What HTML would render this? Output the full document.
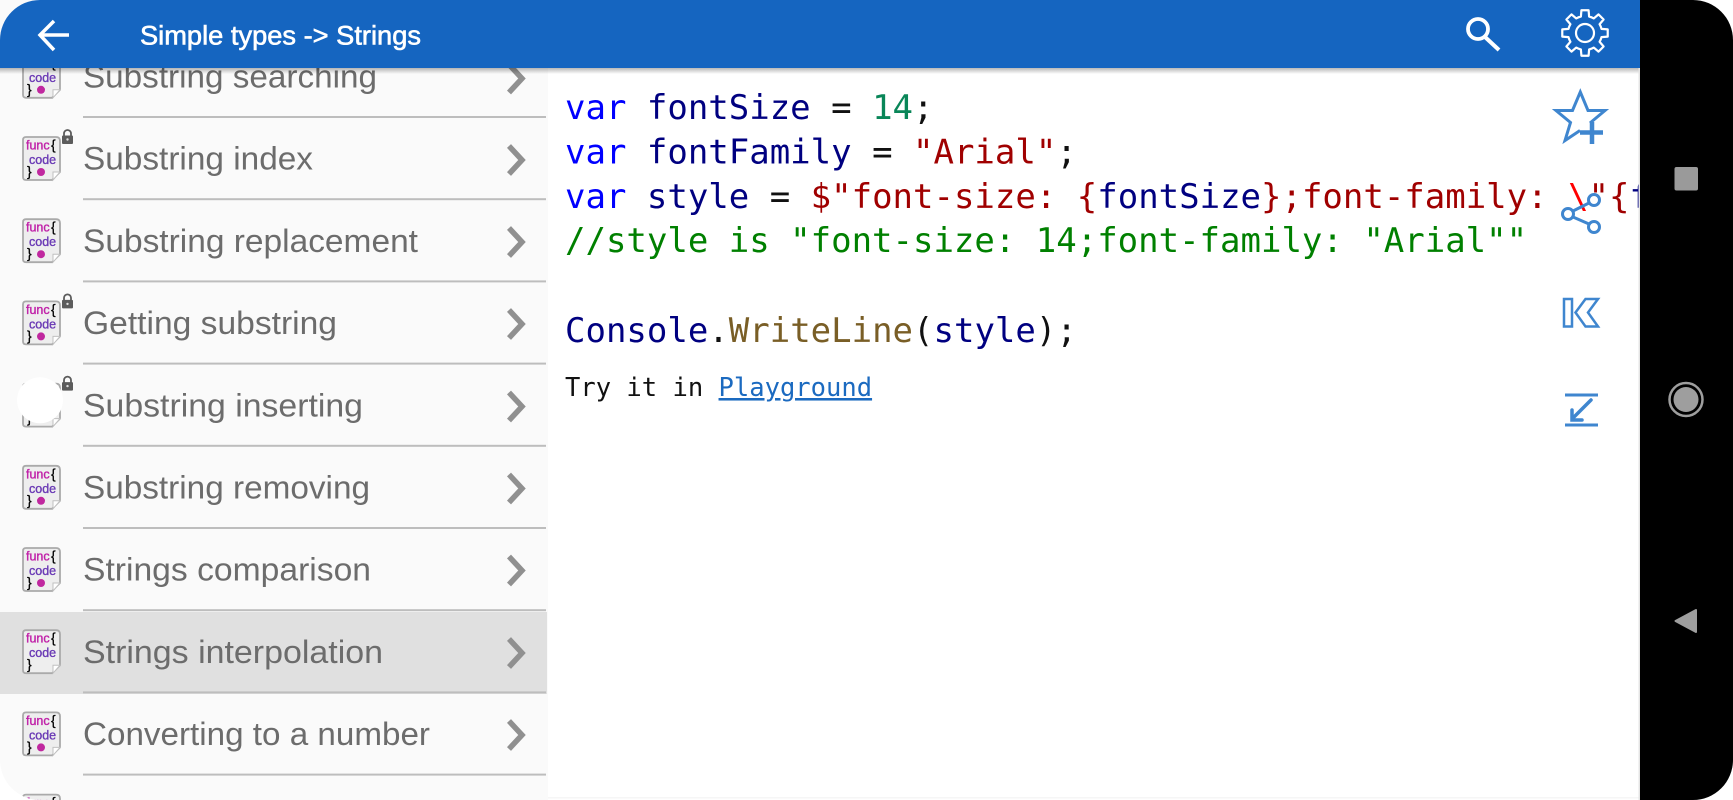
<!DOCTYPE html>
<html><head><meta charset="utf-8">
<style>
html,body{margin:0;padding:0;background:#fff;width:1733px;height:800px;overflow:hidden}
svg{display:block}
.r{font-family:"Liberation Sans",sans-serif;font-size:32.500px;fill:#6c6c6c}
.m{font-family:"DejaVu Sans Mono","Liberation Mono",monospace;font-size:34px;white-space:pre}
.k{fill:#0000ff}.n{fill:#000080}.s{fill:#a00000}.c{fill:#008000}.f{fill:#795e26}.d{fill:#098658}.b{fill:#111}
.fn{font-family:"Liberation Sans",sans-serif;font-size:12.500px;fill:#c020a8;stroke:#c020a8;stroke-width:.35px}
.co{font-family:"Liberation Sans",sans-serif;font-size:12.500px;fill:#6a3ab5;stroke:#6a3ab5;stroke-width:.35px}
.br{font-family:"Liberation Sans",sans-serif;font-size:14px;fill:#000;stroke:#000;stroke-width:.3px}
</style></head>
<body>
<svg width="1733" height="800" viewBox="0 0 1733 800" xmlns="http://www.w3.org/2000/svg">
<defs>
<linearGradient id="sh" x1="0" y1="0" x2="0" y2="1"><stop offset="0" stop-color="#000" stop-opacity=".28"/><stop offset="1" stop-color="#000" stop-opacity="0"/></linearGradient>
<g id="doc">
<path d="M26 137H56Q60 137 60 141V172L52 180H26Q23 180 23 177V140Q23 137 26 137Z" fill="#eeeeee" stroke="#aaaaaa" stroke-width="1.800"/>
<path d="M60 172H53V180Z" fill="#fff" stroke="#c0c0c0" stroke-width="1"/>
</g>
<g id="lock">
<path d="M64 136V133.500A3.500 3.500 0 0 1 71 133.500V136" fill="none" stroke="#5c5c5c" stroke-width="1.800"/>
<rect x="62" y="135.500" width="11" height="8.500" rx="1" fill="#5c5c5c"/>
<circle cx="67.500" cy="139.500" r="1.200" fill="#ddd"/>
</g>
</defs>

<!-- list -->
<path d="M0 0H548V800H40A40 40 0 0 1 0 760Z" fill="#fafafa"/>
<rect x="548" y="797" width="1092" height="1.500" fill="#f6f6f6"/>
<rect x="0" y="612" width="547" height="82" fill="#e0e0e0"/>

<g fill="#bdbdbd">
<rect x="83" y="116" width="463" height="2"/>
<rect x="83" y="198.200" width="463" height="2"/>
<rect x="83" y="280.400" width="463" height="2"/>
<rect x="83" y="362.600" width="463" height="2"/>
<rect x="83" y="444.800" width="463" height="2"/>
<rect x="83" y="527" width="463" height="2"/>
<rect x="83" y="609.200" width="463" height="2"/>
<rect x="83" y="691.400" width="463" height="2"/>
<rect x="83" y="773.600" width="463" height="2"/>
</g>

<!-- row text -->
<text class="r" x="83" y="87.500" textLength="294" lengthAdjust="spacingAndGlyphs">Substring searching</text>
<text class="r" x="83" y="169.700" textLength="230" lengthAdjust="spacingAndGlyphs">Substring index</text>
<text class="r" x="83" y="251.900" textLength="335" lengthAdjust="spacingAndGlyphs">Substring replacement</text>
<text class="r" x="83" y="334.100" textLength="254" lengthAdjust="spacingAndGlyphs">Getting substring</text>
<text class="r" x="83" y="416.300" textLength="280" lengthAdjust="spacingAndGlyphs">Substring inserting</text>
<text class="r" x="83" y="498.500" textLength="287" lengthAdjust="spacingAndGlyphs">Substring removing</text>
<text class="r" x="83" y="580.700" textLength="288" lengthAdjust="spacingAndGlyphs">Strings comparison</text>
<text class="r" x="83" y="662.900" textLength="300" lengthAdjust="spacingAndGlyphs">Strings interpolation</text>
<text class="r" x="83" y="745.100" textLength="347" lengthAdjust="spacingAndGlyphs">Converting to a number</text>

<!-- chevrons -->
<g fill="none" stroke="#909090" stroke-width="5.500">
<path d="M509 64.500L522 78.500L509 92.500"/>
<path d="M509 146L522 160L509 174"/>
<path d="M509 228L522 242L509 256"/>
<path d="M509 310L522 324L509 338"/>
<path d="M509 392.500L522 406.500L509 420.500"/>
<path d="M509 474.500L522 488.500L509 502.500"/>
<path d="M509 556.500L522 570.500L509 584.500"/>
<path d="M509 639L522 653L509 667"/>
<path d="M509 721L522 735L509 749"/>
</g>

<!-- icons -->
<g transform="translate(0,-82.200)"><use href="#doc"/><text class="fn" x="26" y="149.500">func</text><text class="br" x="51" y="149.500">{</text><text class="co" x="29" y="164">code</text><text class="br" x="27" y="176">}</text><circle cx="41" cy="172" r="4" fill="#c0289f"/></g>
<g><use href="#doc"/><text class="fn" x="26" y="149.500">func</text><text class="br" x="51" y="149.500">{</text><text class="co" x="29" y="164">code</text><text class="br" x="27" y="176">}</text><circle cx="41" cy="172" r="4" fill="#c0289f"/><use href="#lock"/></g>
<g transform="translate(0,82.200)"><use href="#doc"/><text class="fn" x="26" y="149.500">func</text><text class="br" x="51" y="149.500">{</text><text class="co" x="29" y="164">code</text><text class="br" x="27" y="176">}</text><circle cx="41" cy="172" r="4" fill="#c0289f"/></g>
<g transform="translate(0,164.400)"><use href="#doc"/><text class="fn" x="26" y="149.500">func</text><text class="br" x="51" y="149.500">{</text><text class="co" x="29" y="164">code</text><text class="br" x="27" y="176">}</text><circle cx="41" cy="172" r="4" fill="#c0289f"/><use href="#lock"/></g>
<g transform="translate(0,246.600)"><use href="#doc"/><text class="br" x="27" y="176">}</text><circle cx="40" cy="153.600" r="23" fill="#fff"/><use href="#lock"/></g>
<g transform="translate(0,328.800)"><use href="#doc"/><text class="fn" x="26" y="149.500">func</text><text class="br" x="51" y="149.500">{</text><text class="co" x="29" y="164">code</text><text class="br" x="27" y="176">}</text><circle cx="41" cy="172" r="4" fill="#c0289f"/></g>
<g transform="translate(0,411)"><use href="#doc"/><text class="fn" x="26" y="149.500">func</text><text class="br" x="51" y="149.500">{</text><text class="co" x="29" y="164">code</text><text class="br" x="27" y="176">}</text><circle cx="41" cy="172" r="4" fill="#c0289f"/></g>
<g transform="translate(0,493.200)"><use href="#doc"/><text class="fn" x="26" y="149.500">func</text><text class="br" x="51" y="149.500">{</text><text class="co" x="29" y="164">code</text><text class="br" x="27" y="176">}</text></g>
<g transform="translate(0,575.400)"><use href="#doc"/><text class="fn" x="26" y="149.500">func</text><text class="br" x="51" y="149.500">{</text><text class="co" x="29" y="164">code</text><text class="br" x="27" y="176">}</text><circle cx="41" cy="172" r="4" fill="#c0289f"/></g>
<g transform="translate(0,657.600)"><use href="#doc"/><text class="fn" x="26" y="149.500">func</text><text class="br" x="51" y="149.500">{</text></g>

<!-- bottom-left corner mask -->
<path d="M0 760V800H40A40 40 0 0 1 0 760Z" fill="#fff"/>

<!-- code -->
<text class="m" x="565" y="119"><tspan class="k">var</tspan><tspan class="n"> fontSize </tspan><tspan class="b">= </tspan><tspan class="d">14</tspan><tspan class="b">;</tspan></text>
<text class="m" x="565" y="163.500"><tspan class="k">var</tspan><tspan class="n"> fontFamily </tspan><tspan class="b">= </tspan><tspan class="s">"Arial"</tspan><tspan class="b">;</tspan></text>
<text class="m" x="565" y="208"><tspan class="k">var</tspan><tspan class="n"> style </tspan><tspan class="b">= </tspan><tspan class="s">$"font-size: {</tspan><tspan class="n">fontSize</tspan><tspan class="s">};font-family: </tspan><tspan fill="#ff0000">\</tspan><tspan class="s">"{</tspan><tspan class="n">fontFamily</tspan><tspan class="s">}</tspan></text>
<text class="m c" x="565" y="252">//style is "font-size: 14;font-family: "Arial""</text>
<text class="m" x="565" y="342"><tspan class="n">Console</tspan><tspan class="b">.</tspan><tspan class="f">WriteLine</tspan><tspan class="b">(</tspan><tspan class="n">style</tspan><tspan class="b">);</tspan></text>
<text class="m b" style="font-size:25.500px" x="565" y="396">Try it in <tspan fill="#1b6ac0" style="text-decoration:underline">Playground</tspan></text>

<!-- side icons -->
<g fill="none" stroke="#3f86cf" stroke-width="3">
<path d="M1590 123L1605 110.500H1588L1580.300 92L1572.500 110.500H1556L1570.500 122.500L1565 140.500L1580 130.500"/>
<circle cx="1568" cy="214" r="5.500"/>
<circle cx="1594" cy="200" r="5.500"/>
<circle cx="1594" cy="227" r="5.500"/>
<path d="M1573 211L1589 203M1573 217L1589 224"/>
<rect x="1564" y="299" width="8" height="27.500" stroke-width="2.500"/>
<path d="M1575.500 312.500L1585.500 299H1598L1588 312.500L1598 326.500H1585.500Z" stroke-width="2.500"/>
</g>
<path d="M1592 122V144M1580 132.500H1603" stroke="#3f86cf" stroke-width="4.500" fill="none"/>
<path d="M1565 395H1598M1565 425H1598" stroke="#3f86cf" stroke-width="3" fill="none"/>
<path d="M1591 400L1573 418M1572 410V420H1582" stroke="#3f86cf" stroke-width="3.500" fill="none" stroke-linecap="round"/>

<!-- header -->
<rect x="0" y="68" width="1640" height="6" fill="url(#sh)"/>
<path d="M40 0H1640V68H0V40A40 40 0 0 1 40 0Z" fill="#1565c0"/>
<path d="M69 35H41M54 21L40 35L54 50" fill="none" stroke="#fff" stroke-width="3.500"/>
<text x="140" y="44.500" font-family="Liberation Sans,sans-serif" font-size="26.500px" fill="#fff" stroke="#fff" stroke-width=".6" textLength="281" lengthAdjust="spacingAndGlyphs">Simple types -&gt; Strings</text>
<circle cx="1478" cy="29" r="10" fill="none" stroke="#fff" stroke-width="3.800"/>
<path d="M1485 37L1499 50" stroke="#fff" stroke-width="4" fill="none"/>
<g transform="translate(1585,33)" fill="none" stroke="#fff" stroke-width="2.200" stroke-linejoin="round">
<path d="M16.500 -4.110L22.720 -3.600V3.600L16.500 4.110A17 17 0 0 1 14.570 8.760L18.610 13.520L13.520 18.610L8.760 14.570A17 17 0 0 1 4.110 16.500L3.600 22.720H-3.600L-4.110 16.500A17 17 0 0 1 -8.760 14.570L-13.520 18.610L-18.610 13.520L-14.570 8.760A17 17 0 0 1 -16.500 4.110L-22.720 3.600V-3.600L-16.500 -4.110A17 17 0 0 1 -14.570 -8.760L-18.610 -13.520L-13.520 -18.610L-8.760 -14.570A17 17 0 0 1 -4.110 -16.500L-3.600 -22.720H3.600L4.110 -16.500A17 17 0 0 1 8.760 -14.570L13.520 -18.610L18.610 -13.520L14.570 -8.760A17 17 0 0 1 16.500 -4.110Z"/>
<circle r="9"/>
</g>

<!-- nav bar -->
<rect x="1638.500" y="68" width="1.500" height="732" fill="#e4e4e4"/>
<path d="M1640 0H1693A40 40 0 0 1 1733 40V760A40 40 0 0 1 1693 800H1640Z" fill="#000"/>
<rect x="1674.500" y="167" width="23.500" height="23.500" rx="2" fill="#9a9a9a"/>
<circle cx="1686" cy="399.500" r="16.500" fill="none" stroke="#9e9e9e" stroke-width="2.500"/>
<circle cx="1686" cy="399.500" r="12.500" fill="#9e9e9e"/>
<path d="M1696 610V632L1675.500 621Z" fill="#9e9e9e" stroke="#9e9e9e" stroke-width="2" stroke-linejoin="round"/>
</svg>
</body></html>
